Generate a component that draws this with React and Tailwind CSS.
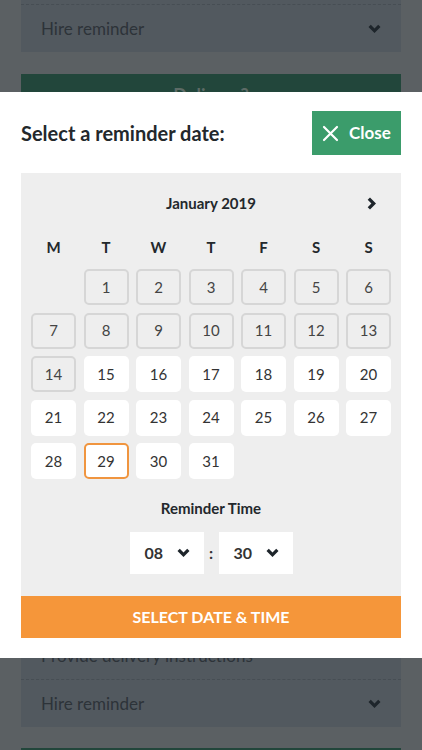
const days = ['M', 'T', 'W', 'T', 'F', 'S', 'S'];

// January 2019 starts on a Tuesday
const cells = [null, ...Array.from({ length: 31 }, (_, i) => i + 1)];

function ChevronDown({ className }) {
    return (
        <svg className={className} width="13" height="10" viewBox="0 0 13 10" fill="currentColor">
            <path d="M0.5 3 L2.8 0.7 L6.5 4.4 L10.2 0.7 L12.5 3 L6.5 9 Z" />
        </svg>
    );
}

function ChevronRight({ className }) {
    return (
        <svg className={className} width="10" height="13" viewBox="0 0 10 13" fill="currentColor">
            <path d="M3 0.5 L0.7 2.8 L4.4 6.5 L0.7 10.2 L3 12.5 L9 6.5 Z" />
        </svg>
    );
}

function DayCell({ day }) {
    if (day === null) return <div />;
    const past = day < 15;
    const selected = day === 29;
    let cls = 'bg-white text-[#333]';
    if (past) cls = 'bg-[#eeeeee] border-2 border-[#d6d6d6] text-[#444]';
    if (selected) cls = 'bg-white border-2 border-[#f0953f] text-[#333]';
    return (
        <div className={`h-[36px] rounded-[5px] flex items-center justify-center text-[15px] ${cls}`}>
            {day}
        </div>
    );
}

function TimeSelect({ value }) {
    return (
        <div className="w-[74px] h-[42px] bg-white flex items-center justify-between pl-[15px] pr-[14px]">
            <span className="text-[16px] font-bold text-[#333]">{value}</span>
            <ChevronDown className="text-[#1e252b]" />
        </div>
    );
}

export default function App() {
    return (
        <div className="relative w-[422px] h-[750px] overflow-hidden bg-[#5b6063] font-['Lato',sans-serif]">
            {/* page behind the dialog */}
            <div className="px-[21px]">
                <div className="bg-[#52595f]">
                    <div className="h-[5px] border-b border-dashed border-[#474e54]" />
                    <div className="h-[47px] flex items-center justify-between pl-[20px] pr-[20px]">
                        <span className="text-[17px] text-[#2d3339]">Hire reminder</span>
                        <ChevronDown className="text-[#1e252b]" />
                    </div>
                </div>
                <div className="mt-[22px] h-[50px] bg-[#22463b] flex justify-center pt-[8px]">
                    <span className="text-[18px] font-bold text-[#5d6b66]">Delivery?</span>
                </div>
                <div className="h-[509px]" />
                <div className="bg-[#52595f]">
                    <div className="h-[47px] flex items-center pl-[20px] border-b border-dashed border-[#474e54]">
                        <span className="text-[17px] text-[#2d3339]">Provide delivery instructions</span>
                    </div>
                    <div className="h-[47px] flex items-center justify-between pl-[20px] pr-[20px]">
                        <span className="text-[17px] text-[#2d3339]">Hire reminder</span>
                        <ChevronDown className="text-[#1e252b]" />
                    </div>
                </div>
                <div className="mt-[21px] h-[40px] bg-[#22463b]" />
            </div>

            {/* dialog */}
            <div className="absolute left-0 right-0 top-[92px] h-[566px] bg-white px-[21px] pt-[19px]">
                <div className="flex items-center justify-between">
                    <h2 className="text-[20px] font-bold text-[#23282c]">Select a reminder date:</h2>
                    <button className="w-[89px] h-[44px] bg-[#3b9c6b] text-white flex items-center justify-center gap-[10px]">
                        <svg width="17" height="17" viewBox="0 0 17 17" stroke="white" strokeWidth="2.2" strokeLinecap="round">
                            <path d="M2 2 L15 15 M15 2 L2 15" />
                        </svg>
                        <span className="text-[17px] font-bold">Close</span>
                    </button>
                </div>

                <div className="mt-[18px] bg-[#eeeeee] px-[10px] pt-[20px] pb-[22px]">
                    <div className="relative h-[20px] flex items-center justify-center">
                        <span className="text-[15px] font-bold text-[#23282c]">January 2019</span>
                        <ChevronRight className="absolute right-[14px] top-[4px] text-[#1e252b]" />
                    </div>
                    <div className="mt-[24px] grid grid-cols-7 gap-x-[7.5px]">
                        {days.map((d, i) => (
                            <div key={i} className="h-[20px] flex items-center justify-center text-[15px] font-bold text-[#23282c]">
                                {d}
                            </div>
                        ))}
                    </div>
                    <div className="mt-[12px] grid grid-cols-7 gap-x-[7.5px] gap-y-[7.5px]">
                        {cells.map((d, i) => (
                            <DayCell key={i} day={d} />
                        ))}
                    </div>
                    <div className="mt-[19px] h-[20px] flex items-center justify-center text-[15px] font-bold text-[#23282c]">
                        Reminder Time
                    </div>
                    <div className="mt-[14px] flex items-center justify-center gap-[5px]">
                        <TimeSelect value="08" />
                        <span className="w-[5px] text-center text-[16px] font-bold text-[#333]">:</span>
                        <TimeSelect value="30" />
                    </div>
                </div>
                <button className="w-full h-[42px] bg-[#f5963a] text-white text-[16px] font-bold uppercase">
                    Select date &amp; time
                </button>
            </div>
        </div>
    );
}
